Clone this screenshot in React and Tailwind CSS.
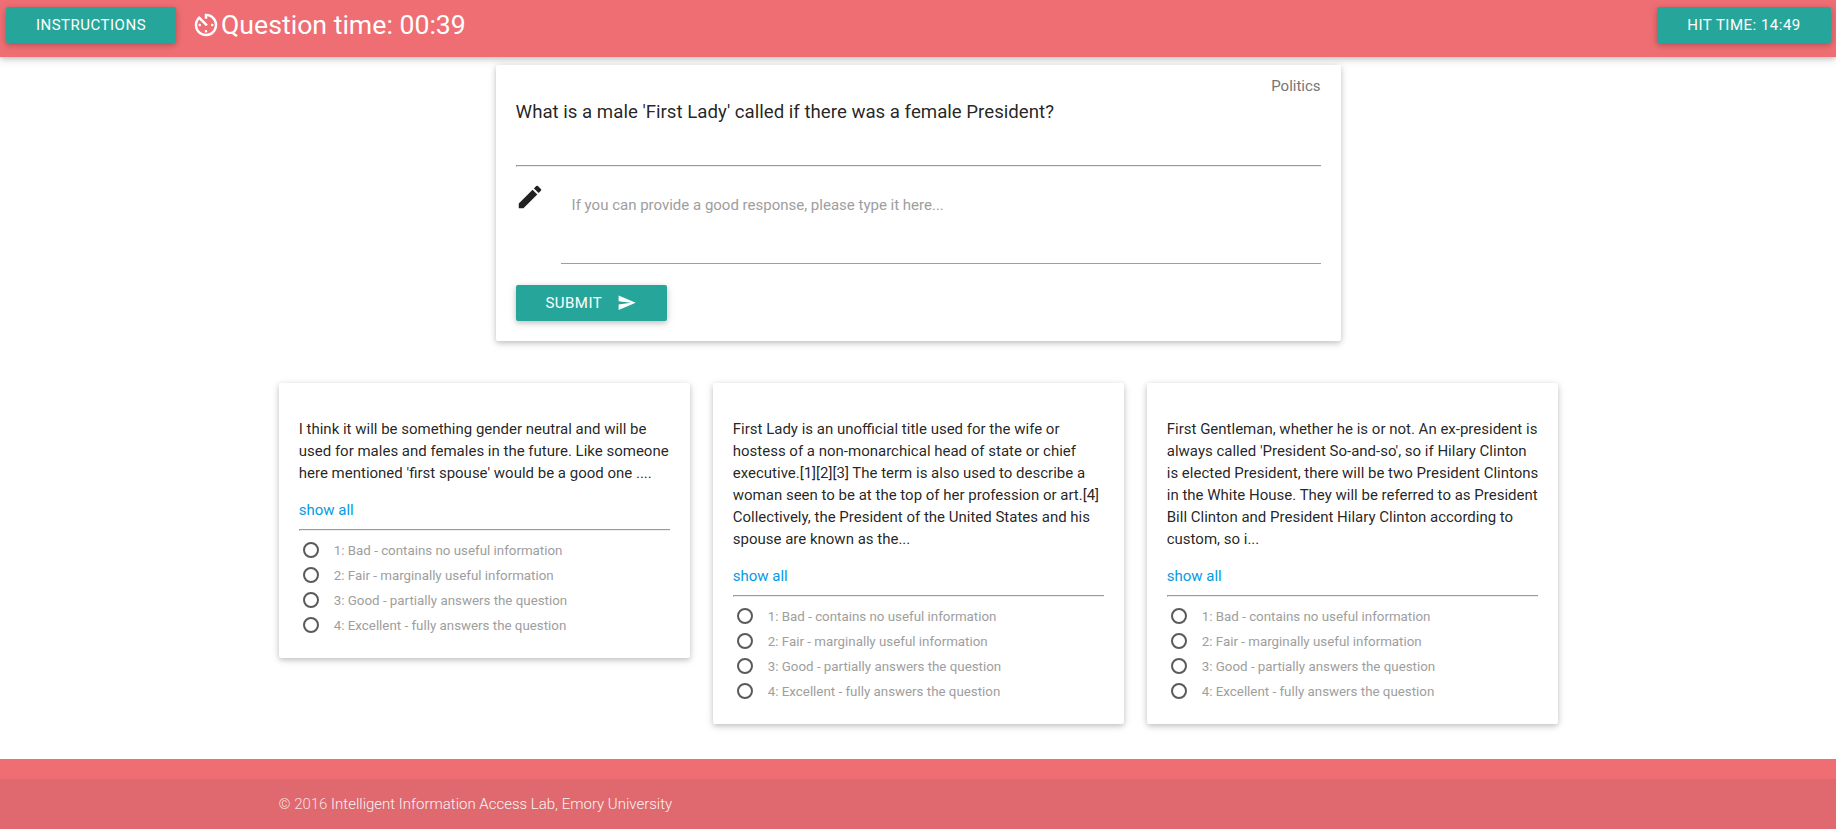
import React from "react";
import { MdAvTimer, MdModeEdit, MdSend } from "react-icons/md";

const RATINGS = [
  "1: Bad - contains no useful information",
  "2: Fair - marginally useful information",
  "3: Good - partially answers the question",
  "4: Excellent - fully answers the question",
];

const ANSWERS = [
  [
    "I think it will be something gender neutral and will be",
    "used for males and females in the future. Like someone",
    "here mentioned 'first spouse' would be a good one ....",
  ],
  [
    "First Lady is an unofficial title used for the wife or",
    "hostess of a non-monarchical head of state or chief",
    "executive.[1][2][3] The term is also used to describe a",
    "woman seen to be at the top of her profession or art.[4]",
    "Collectively, the President of the United States and his",
    "spouse are known as the...",
  ],
  [
    "First Gentleman, whether he is or not. An ex-president is",
    "always called 'President So-and-so', so if Hilary Clinton",
    "is elected President, there will be two President Clintons",
    "in the White House. They will be referred to as President",
    "Bill Clinton and President Hilary Clinton according to",
    "custom, so i...",
  ],
];

const SHADOW = "shadow-[0_2px_5px_0_rgba(0,0,0,0.16),0_2px_10px_0_rgba(0,0,0,0.12)]";
const BUTTON =
  "flex h-9 items-center justify-center rounded-[2px] bg-[#26a69a] text-[15px] uppercase tracking-[0.5px] text-white " +
  SHADOW;

function Divider() {
  return <div className="h-0.5 border-t border-l border-b border-t-[#9a9a9a] border-l-[#9a9a9a] border-b-[#eeeeee]" />;
}

function AnswerCard({ lines, name }) {
  return (
    <article className={"w-[411px] rounded-[2px] bg-white pr-5 pl-[19.75px] pt-[35px] pb-5 " + SHADOW}>
      <p className="text-[15px] leading-[22px]">
        {lines.map((line) => (
          <span key={line} className="block whitespace-nowrap">
            {line}
          </span>
        ))}
      </p>
      <a className="mt-[15px] mb-2 block text-[15px] leading-[22px] text-[#039be5]">show all</a>
      <Divider />
      <div className="mt-[7px]">
        {RATINGS.map((rating) => (
          <label key={rating} className="flex h-[25px] items-start text-[13.33px] leading-[25px] text-[#9e9e9e]">
            <input
              type="radio"
              name={name}
              className="mt-1 mr-[15px] ml-1 size-4 appearance-none rounded-full border-2 border-[#5a5a5a]"
            />
            <span>{rating}</span>
          </label>
        ))}
      </div>
    </article>
  );
}

export default function App() {
  return (
    <div className="h-[832px] w-[1836px] overflow-hidden bg-white font-['Roboto',sans-serif] text-[15px] text-[rgba(0,0,0,0.87)]">
      <header className={"flex h-[57px] items-start justify-between bg-[#ee6e73] pt-[7px] pr-[5px] pl-1.5 text-white " + SHADOW}>
        <div className="flex items-start">
          <button className={BUTTON + " w-[170px]"}>Instructions</button>
          <div className="ml-[15px] flex h-9 items-center text-[26.67px]">
            <MdAvTimer className="size-[30px]" />
            <span>Question time: 00:39</span>
          </div>
        </div>
        <button className={BUTTON + " w-[174px]"}>Hit time: 14:49</button>
      </header>

      <main>
        <section className={"mt-2 ml-[495.6px] h-[276px] w-[845px] rounded-[2px] bg-white px-5 pt-[10px] " + SHADOW}>
          <div className="text-right text-[15px] leading-[22px] text-[#757575]">Politics</div>
          <h1 className="mt-0.5 mb-10 text-[18.66px] leading-[26px]">
            What is a male 'First Lady' called if there was a female President?
          </h1>
          <Divider />
          <div className="flex">
            <MdModeEdit className="mt-[15px] mr-[15px] -ml-px size-[30px] shrink-0" />
            <textarea
              className="ml-px h-[97px] flex-1 resize-none border-b border-[#9e9e9e] px-[11px] pt-[27px] leading-[22px] outline-none placeholder:text-[#9e9e9e]"
              placeholder="If you can provide a good response, please type it here..."
            />
          </div>
          <button className={BUTTON + " mt-[21px] w-[151px] gap-[15px]"}>
            <span>Submit</span>
            <MdSend className="size-[19.5px]" />
          </button>
        </section>

        <section className="mt-[42px] ml-[279px] flex h-[376px] items-start gap-[23px]">
          {ANSWERS.map((lines, index) => (
            <AnswerCard key={lines[0]} lines={lines} name={"rating-" + index} />
          ))}
        </section>
      </main>

      <footer className="bg-[#ee6e73] pt-5">
        <div className="flex h-[50px] items-center bg-[rgba(51,51,51,0.08)] pl-[278.5px] font-light text-[rgba(255,255,255,0.8)]">
          <span className="whitespace-pre">© 2016 </span>
          <a className="text-[#f5f5f5]">Intelligent Information Access Lab, Emory University</a>
        </div>
      </footer>
    </div>
  );
}
